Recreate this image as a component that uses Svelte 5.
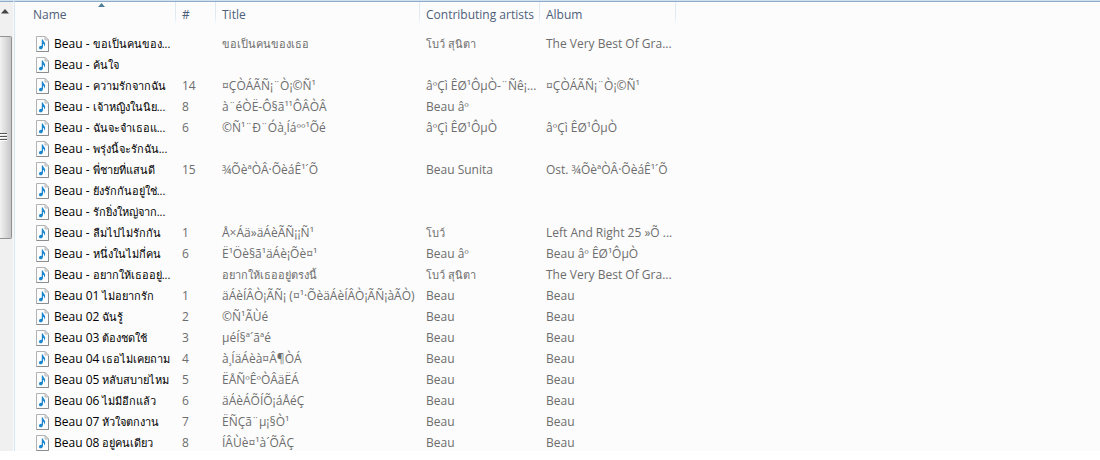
<script lang="ts">
  interface Track {
    prefix: string;
    name: string;
    no?: string;
    title?: string;
    artist?: string;
    album?: string;
  }

  const columns = [
    { key: "name", label: "Name" },
    { key: "no", label: "#" },
    { key: "title", label: "Title" },
    { key: "artist", label: "Contributing artists" },
    { key: "album", label: "Album" },
  ];

  const tracks: Track[] = [
    { prefix: "Beau -", name: "ขอเป็นคนของ...", title: "ขอเป็นคนของเธอ", artist: "โบว์ สุนิตา", album: "The Very Best Of Gra..." },
    { prefix: "Beau -", name: "ค้นใจ" },
    { prefix: "Beau -", name: "ความรักจากฉัน", no: "14", title: "¤ÇÒÁÃÑ¡¨Ò¡©Ñ¹", artist: "âºÇì ÊØ¹ÔµÒ-¨Ñê¡...", album: "¤ÇÒÁÃÑ¡¨Ò¡©Ñ¹" },
    { prefix: "Beau -", name: "เจ้าหญิงในนิย...", no: "8", title: "à¨éÒË-Ô§ã¹¹ÔÂÒÂ", artist: "Beau âº" },
    { prefix: "Beau -", name: "ฉันจะจำเธอแ...", no: "6", title: "©Ñ¹¨Ð¨Óà¸Íáºº¹Õé", artist: "âºÇì ÊØ¹ÔµÒ", album: "âºÇì ÊØ¹ÔµÒ" },
    { prefix: "Beau -", name: "พรุ่งนี้จะรักฉัน..." },
    { prefix: "Beau -", name: "พี่ชายที่แสนดี", no: "15", title: "¾ÕèªÒÂ·ÕèáÊ¹´Õ", artist: "Beau Sunita", album: "Ost. ¾ÕèªÒÂ·ÕèáÊ¹´Õ" },
    { prefix: "Beau -", name: "ยังรักกันอยู่ใช่..." },
    { prefix: "Beau -", name: "รักยิ่งใหญ่จาก..." },
    { prefix: "Beau -", name: "ลืมไปไม่รักกัน", no: "1", title: "Å×Áä»äÁèÃÑ¡¡Ñ¹", artist: "โบว์", album: "Left And Right 25 »Õ ..." },
    { prefix: "Beau -", name: "หนึ่งในไม่กี่คน", no: "6", title: "Ë¹Öè§ã¹äÁè¡Õè¤¹", artist: "Beau âº", album: "Beau âº ÊØ¹ÔµÒ" },
    { prefix: "Beau -", name: "อยากให้เธออยู่...", title: "อยากให้เธออยู่ตรงนี้", artist: "โบว์ สุนิตา", album: "The Very Best Of Gra..." },
    { prefix: "Beau 01", name: "ไม่อยากรัก", no: "1", title: "äÁèÍÂÒ¡ÃÑ¡ (¤¹·ÕèäÁèÍÂÒ¡ÃÑ¡àÃÒ)", artist: "Beau", album: "Beau" },
    { prefix: "Beau 02", name: "ฉันรู้", no: "2", title: "©Ñ¹ÃÙé", artist: "Beau", album: "Beau" },
    { prefix: "Beau 03", name: "ต้องชดใช้", no: "3", title: "µéÍ§ª´ãªé", artist: "Beau", album: "Beau" },
    { prefix: "Beau 04", name: "เธอไม่เคยถาม", no: "4", title: "à¸ÍäÁèà¤Â¶ÒÁ", artist: "Beau", album: "Beau" },
    { prefix: "Beau 05", name: "หลับสบายไหม", no: "5", title: "ËÅÑºÊºÒÂäËÁ", artist: "Beau", album: "Beau" },
    { prefix: "Beau 06", name: "ไม่มีอีกแล้ว", no: "6", title: "äÁèÁÕÍÕ¡áÅéÇ", artist: "Beau", album: "Beau" },
    { prefix: "Beau 07", name: "หัวใจตกงาน", no: "7", title: "ËÑÇã¨µ¡§Ò¹", artist: "Beau", album: "Beau" },
    { prefix: "Beau 08", name: "อยู่คนเดียว", no: "8", title: "ÍÂÙè¤¹à´ÕÂÇ", artist: "Beau", album: "Beau" },
  ];

  const isThai = (text = "") => /[\u0e00-\u0e7f]/.test(text);
</script>

<div class="explorer">
  <div class="scrollbar">
    <button class="up" aria-label="Scroll up">
      <svg width="8" height="5" viewBox="0 0 8 5"><path d="M4 0 8 4.500H0z" fill="#444" /></svg>
    </button>
    <div class="thumb">
      <svg width="7" height="9" viewBox="0 0 7 9" shape-rendering="crispEdges">
        <path d="M0 0h7v1H0zM0 3h7v1H0zM0 6h7v1H0z" fill="#555" />
        <path d="M0 1h7v1H0zM0 4h7v1H0zM0 7h7v1H0z" fill="#fff" />
      </svg>
    </div>
  </div>

  <div class="files">
    <table>
      <colgroup>
        {#each columns as column (column.key)}
          <col class="col-{column.key}" />
        {/each}
        <col />
      </colgroup>
      <thead>
        <tr>
          {#each columns as column (column.key)}
            <th class={column.key} aria-sort={column.key === "name" ? "ascending" : undefined}>
              <button>{column.label}</button>
              {#if column.key === "name"}
                <svg class="sort" width="7" height="4" viewBox="0 0 7 4">
                  <path d="M3.500 0 7 4H0z" fill="#4f7f98" />
                </svg>
              {/if}
            </th>
          {/each}
          <td></td>
        </tr>
      </thead>
      <tbody>
        {#each tracks as track}
          <tr>
            <td class="name">
              <div class="file">
                <svg width="13" height="16" viewBox="0 0 13 16">
                  <path d="M.5.5h8.500l3.500 3.500v11.500H.5z" fill="#fdfdfd" stroke="#b0b2b4" />
                  <path d="M.5 15.500h12V5" fill="none" stroke="#8b8e91" />
                  <path d="M9 .5V4h3.500z" fill="#e8eaec" stroke="#b4b6b8" />
                  <path d="M5.800 3.500H7c0 1.800 2.200 2.400 2.200 4.500 0 1-.4 1.900-1.100 2.700.3-1.500 0-2.400-1.100-2.900v2.900c0 1.500-.9 2.600-2.200 2.600-1.100 0-1.800-.7-1.800-1.600 0-1.300 1.200-2.200 2.800-1.900z" fill="#1c86cf" />
                </svg>
                <span>{track.prefix} <span class="thai">{track.name}</span></span>
              </div>
            </td>
            <td>{track.no ?? ""}</td>
            <td><span class:thai={isThai(track.title)}>{track.title ?? ""}</span></td>
            <td><span class:thai={isThai(track.artist)}>{track.artist ?? ""}</span></td>
            <td>{track.album ?? ""}</td>
            <td></td>
          </tr>
        {/each}
      </tbody>
    </table>
  </div>
</div>

<style>
  :global(body) {
    margin: 0;
    background: #fff;
  }

  .explorer {
    display: flex;
    box-sizing: border-box;
    height: calc(100vh - 9px);
    overflow: hidden;
    border-top: 1px solid #cfe0ee;
    background: #fcfcfc;
    color: #6d6d6d;
    font: 12px/20px "Open Sans", "Noto Sans", sans-serif;
  }

  .scrollbar {
    flex: none;
    width: 13px;
    border-top: 1px solid #8facc8;
    border-right: 1px solid #f8f8f8;
    background: #f0f0f0;
  }

  button {
    padding: 0;
    border: 0;
    background: none;
    color: inherit;
    font: inherit;
  }

  .up {
    display: flex;
    align-items: center;
    width: 10px;
    height: 34px;
    padding: 0 0 16px 1px;
    box-sizing: border-box;
  }

  .thumb {
    display: flex;
    align-items: center;
    box-sizing: border-box;
    width: 12px;
    height: 203px;
    border: 1px solid #929292;
    border-left: 0;
    border-radius: 0 2px 2px 0;
    background: linear-gradient(90deg, #f2f2f2, #dcdcdc 50%, #c6c6c9);
  }

  .files {
    flex: 1;
    min-width: 0;
    border-top: 1px solid #8facc8;
    border-left: 1px solid #d8e5f2;
  }

  table {
    width: 100%;
    table-layout: fixed;
    border-collapse: separate;
    border-spacing: 0;
  }

  .col-name {
    width: 161px;
  }

  .col-no {
    width: 40px;
  }

  .col-title {
    width: 204px;
  }

  .col-artist {
    width: 120px;
  }

  .col-album {
    width: 136px;
  }

  th,
  td {
    height: 21px;
    padding: 0 0 0 6px;
    overflow: hidden;
    text-align: left;
    white-space: nowrap;
  }

  th {
    position: relative;
    height: 26px;
    padding-bottom: 5px;
    background: linear-gradient(#dfe9f2, #dfe9f2 60%, #fcfcfc) right top / 1px 23px no-repeat;
    color: #4c607a;
    font-weight: 400;
  }

  th.name {
    padding-left: 18px;
  }

  td.name {
    padding-left: 21px;
    color: #000;
  }

  .sort {
    position: absolute;
    top: 1px;
    left: 83px;
  }

  .file {
    display: flex;
    align-items: center;
    gap: 5px;
  }

  .file svg {
    flex: none;
  }

  .thai {
    font-size: 11px;
  }
</style>
